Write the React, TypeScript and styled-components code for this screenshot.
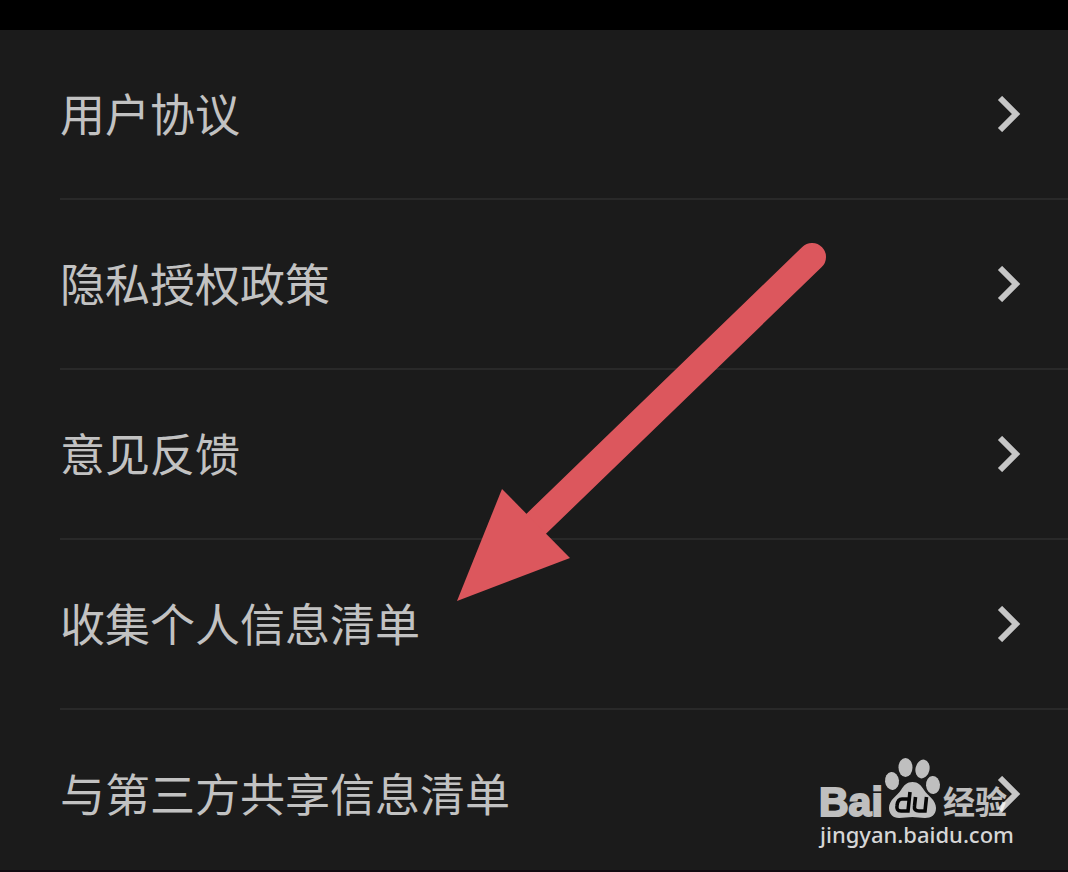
import React from 'react';
import styled, { createGlobalStyle } from 'styled-components';

const GlobalStyle = createGlobalStyle`
  * { box-sizing: border-box; }
  html, body, #root { height: 100%; }
  body {
    margin: 0;
    background: #1b1b1b;
    font-family: 'Noto Sans CJK SC', sans-serif;
  }
`;

const Page = styled.main`
  position: relative;
  min-height: 100%;
  display: flex;
  flex-direction: column;
  background: #1b1b1b;
  border-bottom: 2px solid #120a10;
  overflow: hidden;
`;

const StatusBar = styled.header`
  height: 30px;
  background: #000;
`;

const List = styled.ul`
  list-style: none;
  margin: 0;
  padding: 0 0 0 60px;
`;

const Item = styled.li`
  border-bottom: 2px solid #292929;

  &:last-child {
    border-bottom: 0;
    margin-bottom: -10px;
  }
`;

const RowLink = styled.a`
  display: flex;
  align-items: center;
  justify-content: space-between;
  height: 168px;
  padding-right: 47px;
  color: #c2c2c2;
  text-decoration: none;
`;

const Label = styled.span`
  margin-bottom: 2px;
  font-size: 45px;
  line-height: 64px;
  white-space: nowrap;
`;

const ChevronIcon = styled.svg`
  width: 24px;
  height: 36px;
  flex: none;
`;

const Arrow = styled.svg`
  position: absolute;
  left: 457px;
  top: 243px;
  width: 370px;
  height: 359px;
  pointer-events: none;
`;

const Watermark = styled.div`
  position: absolute;
  right: 56px;
  bottom: 24px;
  width: 192px;
  display: flex;
  flex-direction: column;
  pointer-events: none;
`;

const Logo = styled.svg`
  display: block;
  width: 192px;
  height: 64px;
  opacity: 0.72;
  overflow: visible;
`;

const SiteName = styled.span`
  color: #d6d6d6;
  font-family: 'Noto Sans', sans-serif;
  font-size: 22px;
  font-weight: 500;
  line-height: 24px;
  white-space: nowrap;
`;

const entries = ['用户协议', '隐私授权政策', '意见反馈', '收集个人信息清单', '与第三方共享信息清单'];

function Chevron() {
  return (
    <ChevronIcon viewBox="0 0 24 36" aria-hidden="true">
      <path d="M3 2L19 18L3 34" fill="none" stroke="#c6c6c6" strokeWidth="6" />
    </ChevronIcon>
  );
}

function BaiduLogo() {
  return (
    <Logo viewBox="0 0 192 64" role="img" aria-label="Baidu 经验">
      <g fill="#fff">
        <text x="-1" y="58" fontFamily="Liberation Sans, sans-serif" fontWeight="700" fontSize="41" stroke="#fff" strokeWidth="2">
          Bai
        </text>
        <ellipse cx="72" cy="23" rx="7" ry="9" transform="rotate(-6 72 23)" />
        <ellipse cx="85.5" cy="9.5" rx="7" ry="9.5" />
        <ellipse cx="102.5" cy="11" rx="7" ry="9.5" transform="rotate(12 102.5 11)" />
        <ellipse cx="113" cy="27" rx="7" ry="9" transform="rotate(-4 113 27)" />
        <path d="M92.5 24C98 24 101 27 104 32C108 38 116 42 116 50C116 57 111 60 105 60C100 60 97 59 92.5 59C88 59 84 60 79 60C73 60 69 56 69 50C69 42 77 38 81 32C84 27 87 24 92.5 24Z" />
        <g fill="none" stroke="#000" strokeWidth="3.6">
          <path d="M90 34L88 53H81C77.5 53 76.5 51 77 47.5C77.5 43 79 41 82 41H89" />
          <path d="M95.5 39L94.5 48C94 51.5 95.5 53 99 53H105L106.5 39" />
        </g>
        <text x="123" y="56" fontFamily="Noto Sans CJK SC, sans-serif" fontWeight="700" fontSize="32">
          经验
        </text>
      </g>
    </Logo>
  );
}

export default function App() {
  return (
    <>
      <GlobalStyle />
      <Page>
        <StatusBar />
        <nav>
          <List>
            {entries.map((entry) => (
              <Item key={entry}>
                <RowLink href="#">
                  <Label>{entry}</Label>
                  <Chevron />
                </RowLink>
              </Item>
            ))}
          </List>
        </nav>
        <Arrow viewBox="0 0 370 359" aria-hidden="true">
          <path d="M79 281L355 14" stroke="#dc575d" strokeWidth="28" strokeLinecap="round" />
          <path d="M0 358L45 246L113 315Z" fill="#dc575d" />
        </Arrow>
        <Watermark>
          <BaiduLogo />
          <SiteName>jingyan.baidu.com</SiteName>
        </Watermark>
      </Page>
    </>
  );
}
